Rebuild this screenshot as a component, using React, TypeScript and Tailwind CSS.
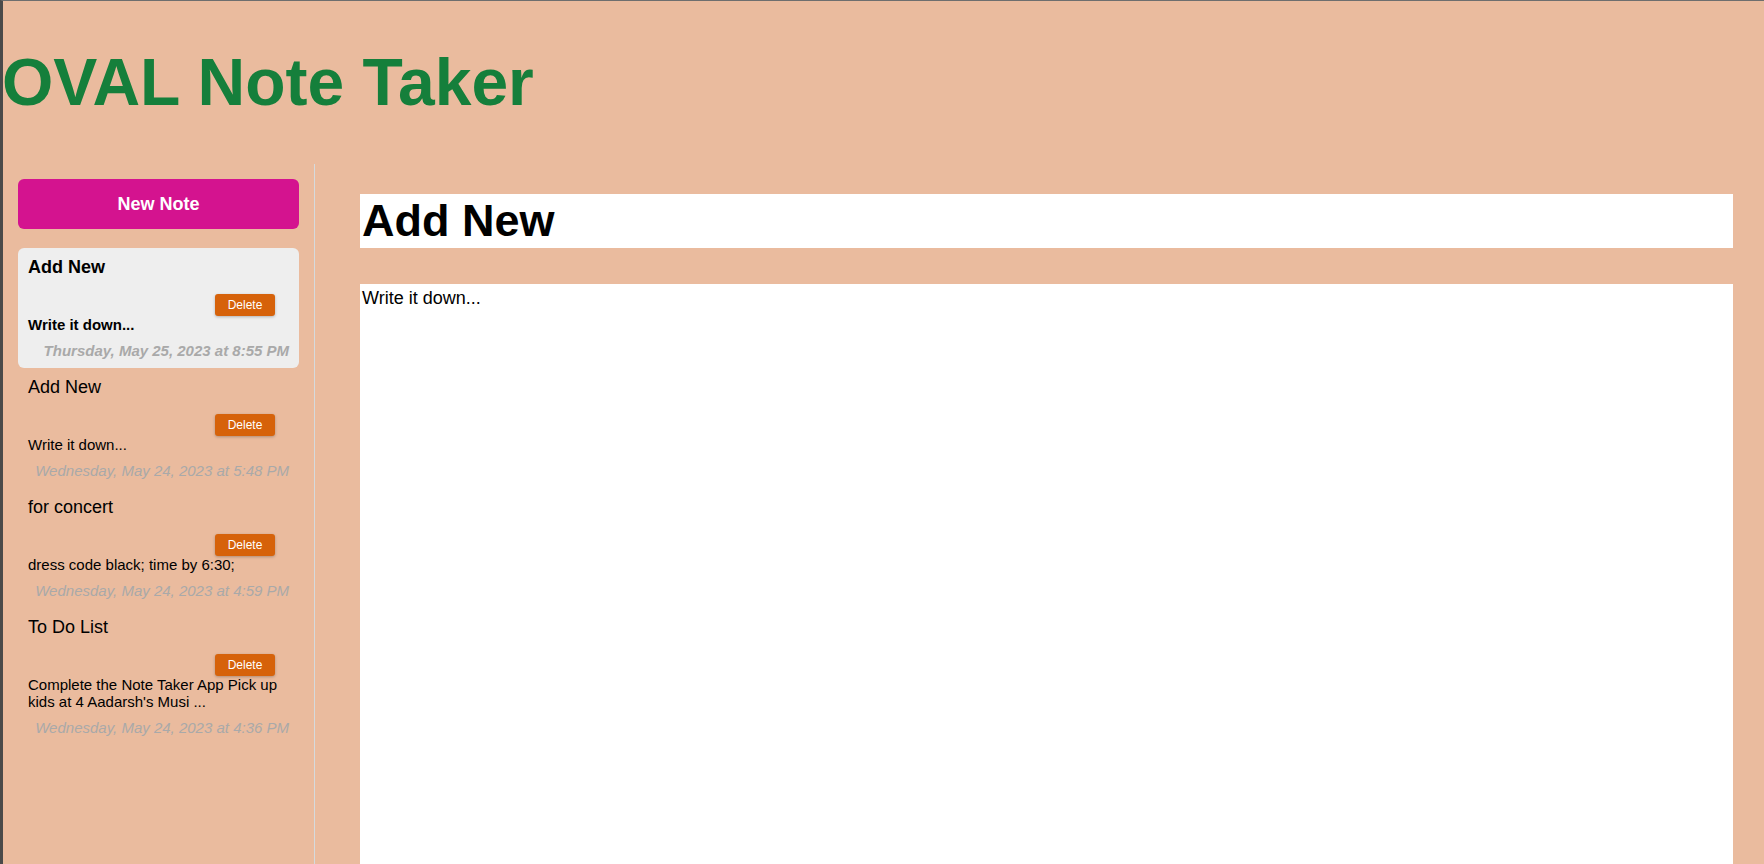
import { useState } from 'react';

type Note = {
  id: number;
  title: string;
  text: string;
  date: string;
};

const notes: Note[] = [
  { id: 1, title: 'Add New', text: 'Write it down...', date: 'Thursday, May 25, 2023 at 8:55 PM' },
  { id: 2, title: 'Add New', text: 'Write it down...', date: 'Wednesday, May 24, 2023 at 5:48 PM' },
  { id: 3, title: 'for concert', text: 'dress code black; time by 6:30;', date: 'Wednesday, May 24, 2023 at 4:59 PM' },
  {
    id: 4,
    title: 'To Do List',
    text: "Complete the Note Taker App Pick up kids at 4 Aadarsh's Musi ...",
    date: 'Wednesday, May 24, 2023 at 4:36 PM',
  },
];

function NoteItem({ note, active, onSelect }: { note: Note; active: boolean; onSelect: () => void }) {
  return (
    <div
      onClick={onSelect}
      className={`cursor-pointer rounded-md px-[10px] pt-[9px] pb-[9px] ${active ? 'bg-[#eeeeee]' : ''}`}
    >
      <div className={`text-[18px] leading-[21px] text-black ${active ? 'font-bold' : ''}`}>{note.title}</div>
      <div className="mt-[16px] flex justify-end pr-[14px]">
        <button className="h-[22px] w-[60px] rounded-[3px] bg-[#d6620a] text-[12px] text-white shadow-[0_1px_3px_rgba(0,0,0,0.25)]">
          Delete
        </button>
      </div>
      <div className={`text-[15px] leading-[17px] text-black ${active ? 'font-bold' : ''}`}>{note.text}</div>
      <div className={`mt-[9px] text-right text-[15px] leading-[17px] italic text-[#a9a9a9] ${active ? 'font-bold' : ''}`}>
        {note.date}
      </div>
    </div>
  );
}

export default function App() {
  const [selected, setSelected] = useState(1);
  const current = notes.find(n => n.id === selected) ?? notes[0];

  return (
    <div className="flex h-screen flex-col overflow-hidden border-t border-l-[3px] border-t-[#6e6e6e] border-l-[#4a4a4a] bg-[#eabb9e] font-['Liberation_Sans',Arial,sans-serif]">
      {/* Header */}
      <header className="h-[163px] shrink-0 pt-[32px]">
        <h1 className="-ml-[1px] text-[66px] leading-[99px] font-bold text-[#157f3b]">OVAL Note Taker</h1>
      </header>

      <div className="flex min-h-0 flex-1">
        {/* Sidebar */}
        <aside className="w-[312px] shrink-0 border-r border-[#d5dadd] px-[15px]">
          <button className="mt-[15px] h-[50px] w-full rounded-md bg-[#d4138f] text-[18px] font-bold text-white">
            New Note
          </button>
          <div className="mt-[19px] flex flex-col">
            {notes.map(note => (
              <NoteItem key={note.id} note={note} active={note.id === selected} onSelect={() => setSelected(note.id)} />
            ))}
          </div>
        </aside>

        {/* Editor */}
        <main className="flex min-w-0 flex-1 flex-col pt-[30px] pr-[31px] pl-[45px]">
          <div className="h-[54px] shrink-0 bg-white px-[2px] pt-[1px] text-[45px] leading-[52px] font-bold text-black">
            {current.title}
          </div>
          <textarea
            className="mt-[36px] flex-1 resize-none bg-white px-[2px] pt-[1px] text-[18px] leading-[27px] text-black outline-none"
            value={current.text}
            readOnly
          />
        </main>
      </div>
    </div>
  );
}
